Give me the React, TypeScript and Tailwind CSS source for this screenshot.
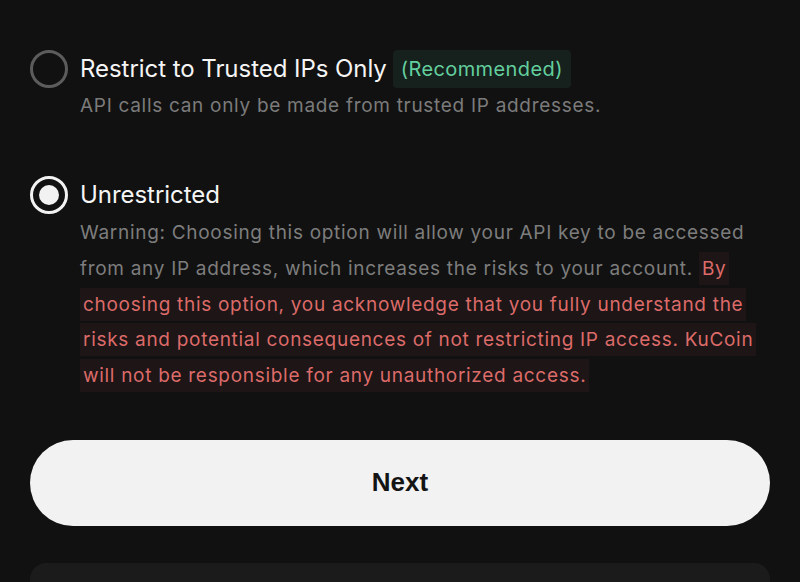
import { memo } from 'react';

const font = { fontFamily: 'Inter, "Noto Sans", sans-serif' };

const Radio = ({ checked }: { checked: boolean }) =>
  checked ? (
    <span className="flex h-[38px] w-[38px] shrink-0 items-center justify-center rounded-full border-[3px] border-[#f2f2f2]">
      <span className="h-[20px] w-[20px] rounded-full bg-[#f2f2f2]" />
    </span>
  ) : (
    <span className="h-[38px] w-[38px] shrink-0 rounded-full border-[3px] border-[#5c5c5c]" />
  );

const AppComponent = () => {
  return (
    <div
      className="h-[582px] w-[800px] overflow-hidden bg-[#111111] px-[30px] pt-[50px] antialiased"
      style={font}
    >
      <div className="flex gap-[12px]">
        <Radio checked={false} />
        <div className="flex flex-col">
          <div className="flex h-[38px] items-center gap-[6px]">
            <span className="text-[24px] tracking-[-0.05px] text-[#f5f5f5]">Restrict to Trusted IPs Only</span>
            <span className="rounded-[4px] bg-[#16201c] px-[8px] py-[4px] text-[20px] tracking-[0.4px] text-[#63cf9f]">
              (Recommended)
            </span>
          </div>
          <p className="mt-[4px] text-[19px] leading-[28px] tracking-[0.7px] text-[#7b7b7b]">
            API calls can only be made from trusted IP addresses.
          </p>
        </div>
      </div>

      <div className="mt-[56px] flex gap-[12px]">
        <Radio checked />
        <div className="flex flex-col">
          <div className="flex h-[38px] items-center">
            <span className="text-[24px] tracking-[-0.05px] text-[#f5f5f5]">Unrestricted</span>
          </div>
          <p className="mt-[1px] w-[720px] text-[19px] leading-[35.8px] tracking-[0.7px] text-[#7d7d7d]">
            Warning: Choosing this option will allow your API key to be accessed
            <br />
            from any IP address, which increases the risks to your account.{' '}
            <span className="box-decoration-clone bg-[#1d1516] px-[3px] py-[5px] text-[#dc6b69]">
              By
              <br />
              choosing this option, you acknowledge that you fully understand the
              <br />
              risks and potential consequences of not restricting IP access. KuCoin
              <br />
              will not be responsible for any unauthorized access.
            </span>
          </p>
        </div>
      </div>

      <button
        type="button"
        className="mt-[46px] flex h-[86px] w-full items-center justify-center rounded-full bg-[#f2f2f2]"
      >
        <span
          className="text-[26px] font-bold text-[#141414]"
          style={{ fontFamily: '"Liberation Sans", Arial, sans-serif' }}
        >
          Next
        </span>
      </button>

      <div className="mt-[37px] h-[80px] w-full rounded-[16px] bg-[#1b1b1b]" />
    </div>
  );
};

const App = memo(AppComponent);
export default App;
